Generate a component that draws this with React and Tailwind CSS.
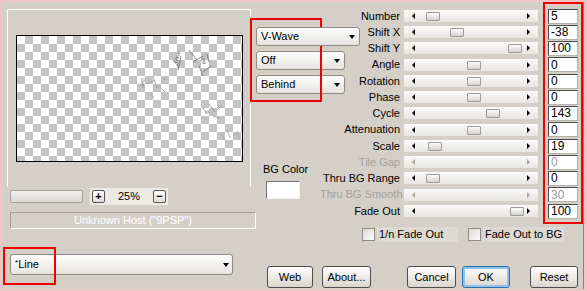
import clsx from 'clsx';

const rows = [
  { label: 'Number', value: '5', thumb: 22 },
  { label: 'Shift X', value: '-38', thumb: 46 },
  { label: 'Shift Y', value: '100', thumb: 104 },
  { label: 'Angle', value: '0', thumb: 63 },
  { label: 'Rotation', value: '0', thumb: 63 },
  { label: 'Phase', value: '0', thumb: 63 },
  { label: 'Cycle', value: '143', thumb: 82 },
  { label: 'Attenuation', value: '0', thumb: 63 },
  { label: 'Scale', value: '19', thumb: 24 },
  { label: 'Tile Gap', value: '0', thumb: null, disabled: true },
  { label: 'Thru BG Range', value: '0', thumb: 22 },
  { label: 'Thru BG Smooth', value: '30', thumb: null, disabled: true },
  { label: 'Fade Out', value: '100', thumb: 106 },
];

function Arrow({ className }) {
  return <span className={clsx('w-0 h-0 border-x-[3.5px] border-x-transparent border-t-[4px] border-t-black', className)} />;
}

function Dropdown({ text, className }) {
  return (
    <div className={clsx('flex items-center justify-between rounded-[3px] border border-[#8d8b86] bg-[linear-gradient(#fefefd,#e6e4df)] pl-[4px] pr-[4px]', className)}>
      <span>{text}</span>
      <Arrow />
    </div>
  );
}

function Slider({ thumb, disabled }) {
  const arrow = disabled ? '#a9a59d' : '#000';
  return (
    <div className="relative h-[12px] w-[134px] flex items-center justify-between px-[8px] bg-[linear-gradient(#fafaf8,#e7e5e0)]">
      <span className="w-0 h-0 border-y-[3px] border-y-transparent border-r-[3px]" style={{ borderRightColor: arrow }} />
      <span className="w-0 h-0 border-y-[3px] border-y-transparent border-l-[3px]" style={{ borderLeftColor: arrow }} />
      {thumb !== null && (
        <span
          className="absolute top-[2px] h-[9px] w-[14px] rounded-[1px] border border-[#9d9b95] bg-[linear-gradient(#fbfbfa,#d6d4ce)]"
          style={{ left: thumb }}
        />
      )}
    </div>
  );
}

function Button({ children, className, focus }) {
  return (
    <div
      className={clsx(
        'h-[22px] flex items-center justify-center rounded-[3px] border bg-[linear-gradient(#ffffff,#e9e7e2_60%,#d8d5cd)]',
        focus ? 'border-[#2f6fa8] shadow-[inset_0_0_0_2px_#8ec3ef]' : 'border-[#4d4d4d]',
        className
      )}
    >
      {children}
    </div>
  );
}

function Checkbox() {
  return <span className="block shrink-0 w-[13px] h-[13px] border border-[#8e8c87] bg-[linear-gradient(135deg,#dcdad4,#fbfbf9)]" />;
}

function PreviewMarks() {
  return (
    <svg className="absolute inset-0" width="227" height="127" viewBox="0 0 227 127">
      <g stroke="#6a6a6a" strokeWidth="0.8" fill="none">
        <path d="M156 24 l5 6 M164 20 l-3 14 M172 14 l8 10 M176 26 l10 -6 M182 30 l4 10 M190 18 l2 8 M186 36 l8 -6" />
        <path d="M124 42 l3 10 M130 48 l8 -4 M136 40 l4 12 M142 50 l6 6 M146 44 l4 -3 M134 58 l3 4" stroke="#9a9a9a" />
        <path d="M186 72 l4 6 M192 68 l6 8 M200 74 l4 -4 M196 80 l6 2" stroke="#8a8a8a" />
        <path d="M204 98 l4 6 M210 94 l3 8 M216 100 l6 -3 M220 95 l2 8" stroke="#a0a0a0" />
      </g>
      <g fill="#555" fontSize="5" fontFamily="Liberation Sans, sans-serif">
        <text x="0" y="0" transform="translate(160 28) rotate(-75)">Wave</text>
        <text x="0" y="0" transform="translate(184 22) rotate(80)">Off</text>
        <text x="0" y="0" transform="translate(126 50) rotate(-70)" fill="#8a8a8a">line</text>
        <text x="0" y="0" transform="translate(188 78) rotate(-10)" fill="#8a8a8a">ok</text>
      </g>
    </svg>
  );
}

export default function App() {
  return (
    <div className="relative w-[587px] h-[291px] border-t-2 border-l-2 border-b-2 border-[#f1c5c5] bg-[#f1c5c5] pr-[3px] font-['Liberation_Sans',Arial,sans-serif] text-[11px] leading-none text-black overflow-hidden">
      <div className="flex h-full bg-[#d4d0c8] border-r border-[#858279]">
        {/* left column */}
        <div className="ml-[5px] w-[249px] flex flex-col">
          <div className="mt-[7px] w-[244px] h-[178px] border-t border-l border-r border-white pl-[8px] pt-[25px]">
            <div className="relative w-[227px] h-[127px] border border-black bg-[conic-gradient(#c3c3c3_25%,#ffffff_0_50%,#c3c3c3_0_75%,#ffffff_0)] bg-[length:16px_16px]">
              <PreviewMarks />
            </div>
          </div>
          <div className="mt-[1px] h-[17px] flex items-center ml-[3px]">
            <div className="w-[73px] h-[13px] rounded-[2px] border border-[#a3a19b] bg-[linear-gradient(#f2f1ee,#d9d7d1)]" />
            <div className="ml-[7px] h-[17px] flex items-center px-[2px] bg-[#eceae5]">
              <span className="w-[13px] h-[13px] flex items-center justify-center rounded-[2px] border border-[#555] bg-[linear-gradient(#fff,#dedbd4)] text-[11px] font-bold">+</span>
              <span className="ml-[13px] w-[22px] text-[11px]">25%</span>
              <span className="ml-[13px] w-[13px] h-[13px] flex items-center justify-center rounded-[2px] border border-[#555] bg-[linear-gradient(#fff,#dedbd4)] text-[11px] font-bold">−</span>
            </div>
          </div>
          <div className="mt-[7px] ml-[3px] w-[246px] h-[17px] flex items-center justify-center border-t border-l border-[#a19e97] border-b border-r border-b-white border-r-white text-white">
            Unknown Host ("9PSP")
          </div>
          <Dropdown text={<span><span className="text-[8px] align-top">*</span>Line</span>} className="mt-[25px] ml-[3px] w-[223px] h-[21px] !pr-[3px]" />
        </div>

        {/* right area */}
        <div className="flex-1 flex flex-col">
          <div className="flex">
            <div className="w-[64px] flex flex-col">
              <Dropdown text="V-Wave" className="mt-[25px] w-[104px] h-[19px] relative z-10" />
              <Dropdown text="Off" className="mt-[5px] w-[89px] h-[19px]" />
              <Dropdown text="Behind" className="mt-[5px] w-[89px] h-[19px]" />
              <div className="mt-[70px] ml-[7px] flex flex-col items-start">
                <span className="whitespace-nowrap">BG Color</span>
                <span className="mt-[6px] ml-[3px] w-[34px] h-[18px] bg-white border-t border-l border-[#77746e] border-b border-r border-b-[#f4f3f0] border-r-[#f4f3f0]" />
              </div>
            </div>
            <div className="mt-[6px] flex flex-col">
              {rows.map((r, i) => (
                <div key={r.label} className={clsx('flex items-center', i % 4 === 3 ? 'h-[17px]' : 'h-[16px]')}>
                  <span className={clsx('w-[80px] text-right whitespace-nowrap', r.disabled && 'text-[#a5a199]')}>{r.label}</span>
                  <div className="ml-[4px]">
                    <Slider thumb={r.thumb} disabled={r.disabled} />
                  </div>
                  <span
                    className={clsx(
                      'ml-[10px] w-[30px] h-[15px] flex items-center pl-[2px] bg-white text-[12px] border-t border-l border-[#4a4a4a] border-b border-r border-b-[#b5b2ab] border-r-[#b5b2ab]',
                      r.disabled && 'text-[#9c9c9c]'
                    )}
                  >
                    {r.value}
                  </span>
                </div>
              ))}
            </div>
          </div>

          <div className="mt-[9px] ml-[106px] flex items-center h-[13px]">
            <Checkbox />
            <span className="ml-[2px] w-[81px] h-[15px] flex items-center pl-[2px] bg-[#dddad4]">1/n Fade Out</span>
            <span className="ml-[10px]"><Checkbox /></span>
            <span className="ml-[2px] w-[81px] h-[15px] flex items-center pl-[2px] bg-[#dddad4] whitespace-nowrap">Fade Out to BG</span>
          </div>

          <div className="mt-[25px] flex">
            <Button className="ml-[11px] w-[46px]">Web</Button>
            <Button className="ml-[9px] w-[49px]">About...</Button>
            <Button className="ml-[36px] w-[49px]">Cancel</Button>
            <Button className="ml-[6px] w-[48px]" focus>OK</Button>
            <Button className="ml-[20px] w-[48px]">Reset</Button>
          </div>
        </div>
      </div>

      {/* red annotation boxes */}
      <div className="absolute left-[248px] top-[16px] w-[72px] h-[84px] border-2 border-[#f20000]" />
      <div className="absolute left-[541px] top-[0px] w-[40px] h-[222px] border-2 border-[#f20000]" />
      <div className="absolute left-[1px] top-[245px] w-[53px] h-[38px] border-2 border-[#f20000]" />
    </div>
  );
}
